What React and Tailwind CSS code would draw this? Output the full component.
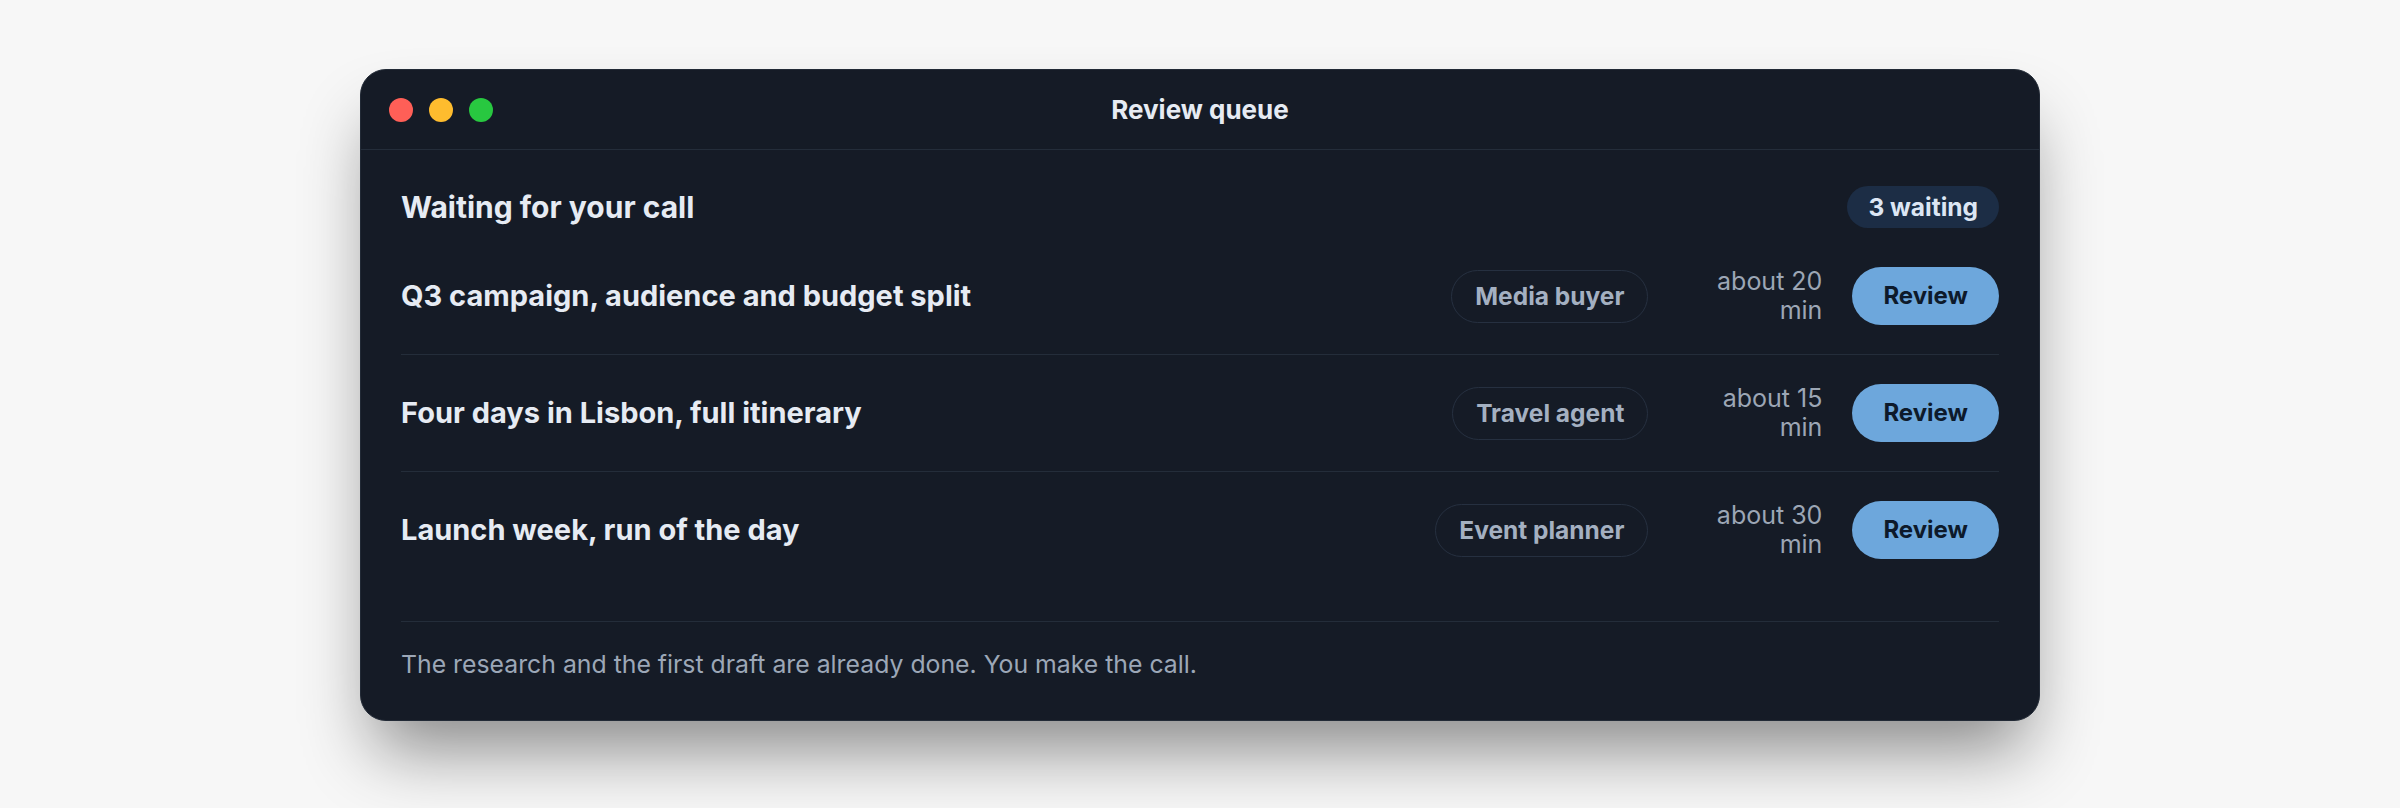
import React from 'react';

const items = [
  { title: 'Q3 campaign, audience and budget split', role: 'Media buyer', eta: 'about 20 min' },
  { title: 'Four days in Lisbon, full itinerary', role: 'Travel agent', eta: 'about 15 min' },
  { title: 'Launch week, run of the day', role: 'Event planner', eta: 'about 30 min' },
];

const ReviewQueue = () => {
  return (
    <div
      className="min-h-screen bg-[#f7f7f7] pt-[69px] pb-[88px]"
      style={{ fontFamily: 'Inter, "Noto Sans", sans-serif' }}
    >
      <div className="mx-auto w-[1680px] overflow-hidden rounded-[26px] border border-[#222a36] bg-[#151b26] shadow-[0_42px_70px_-14px_rgba(0,0,0,0.45)]">
        {/* Title bar */}
        <div className="grid h-[80px] grid-cols-[1fr_auto_1fr] items-center border-b border-[#242d3a] px-[28px]">
          <div className="flex items-center gap-[16px]">
            <span className="h-[24px] w-[24px] rounded-full bg-[#ff5f57]" />
            <span className="h-[24px] w-[24px] rounded-full bg-[#febc2e]" />
            <span className="h-[24px] w-[24px] rounded-full bg-[#28c840]" />
          </div>
          <div className="text-[26px] font-bold text-[#e6ebf3]">Review queue</div>
          <div />
        </div>

        <div className="px-[40px] pt-[36px] pb-[38px]">
          {/* Header */}
          <div className="mb-[10px] flex h-[42px] items-center justify-between">
            <h2 className="text-[30px] font-bold text-[#e6ebf3]">Waiting for your call</h2>
            <span className="rounded-full bg-[#1c2d45] px-[21px] py-[5px] text-[24.5px] font-bold leading-[32px] text-[#dce6f4]">
              3 waiting
            </span>
          </div>

          {/* Rows */}
          <div>
            {items.map((item, i) => (
              <div
                key={i}
                className={`flex items-center gap-[30px] py-[29px] ${i > 0 ? 'border-t border-[#242d3a]' : ''}`}
              >
                <div className="flex-1 text-[29px] font-bold text-[#e6ebf3]">{item.title}</div>
                <span className="rounded-full border-[1.5px] border-[#263040] px-[23px] py-[9px] text-[24.5px] font-bold leading-[33px] text-[#a4b0c1]">
                  {item.role}
                </span>
                <div className="w-[144px] pl-[8px] text-right text-[25px] leading-[29px] text-[#9ca6b5]">{item.eta}</div>
                <button className="h-[58px] rounded-full bg-[#6da7dc] px-[31px] text-[24px] font-bold text-[#0d1a2b]">
                  Review
                </button>
              </div>
            ))}
          </div>

          {/* Footer */}
          <div className="mt-[33px] border-t border-[#242d3a] pt-[24px]">
            <p className="text-[24.8px] leading-[36px] text-[#9ca7b7]">
              The research and the first draft are already done. You make the call.
            </p>
          </div>
        </div>
      </div>
    </div>
  );
};

export default ReviewQueue;
